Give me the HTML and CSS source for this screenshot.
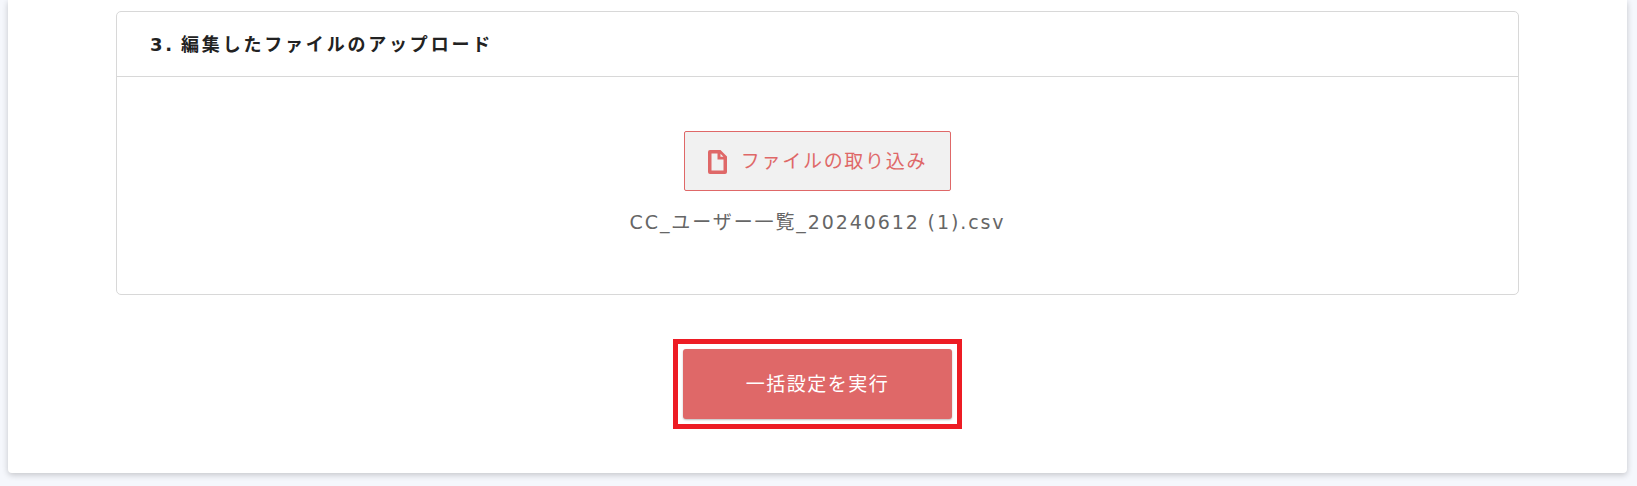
FILE: index.html
```html
<!DOCTYPE html>
<html lang="ja">
<head>
  <meta charset="UTF-8" />
  <title>一括設定</title>
  <link rel="stylesheet" href="styles.css">
</head>
<body>

<div class="panel">
  <div class="card">
    <div class="card-header">
      <h3>3. 編集したファイルのアップロード</h3>
    </div>
    <div class="card-body">
      <button class="file-btn" type="button">
        <svg class="file-icon" viewBox="0 0 19 24" width="19" height="24">
          <path fill-rule="evenodd" d="M2 0h10.500L19 6.500V22a2 2 0 0 1-2 2H2a2 2 0 0 1-2-2V2a2 2 0 0 1 2-2zM3.500 3.500v17h12V9.500h-6v-6zM12.500 3.800v2.900h2.900z"/>
        </svg>
        <span>ファイルの取り込み</span>
      </button>
      <p class="file-name">CC_ユーザー一覧_20240612 (1).csv</p>
    </div>
  </div>

  <div class="actions">
    <div class="highlight">
      <button class="submit-btn" type="button">一括設定を実行</button>
    </div>
  </div>
</div>

</body>
</html>
```

FILE: styles.css
```css
body {
  margin: 0;
  height: 486px;
  overflow: hidden;
  background-color: #f5f7fc;
  font-family: "DejaVu Sans", "Noto Sans CJK JP", sans-serif;
}

.panel {
  box-sizing: border-box;
  width: 1619px;
  height: 473px;
  margin-left: 8px;
  padding: 11px 108px 0 108px;
  background: #fff;
  border-radius: 0 0 4px 4px;
  box-shadow: 0 2px 6px rgba(0,0,0,0.2);
}

.card {
  box-sizing: border-box;
  height: 284px;
  border: 1px solid #d8d8d8;
  border-radius: 5px;
}

.card-header {
  box-sizing: border-box;
  height: 65px;
  padding: 0 33px 3px;
  display: flex;
  align-items: center;
  border-bottom: 1px solid #d8d8d8;
}

.card-header h3 {
  margin: 0;
  font-size: 18px;
  font-weight: 700;
  letter-spacing: 2.8px;
  word-spacing: -3px;
  color: #222;
}

.card-body {
  display: flex;
  flex-direction: column;
  align-items: center;
  padding-top: 54px;
}

.file-btn {
  box-sizing: border-box;
  width: 267px;
  height: 60px;
  padding-bottom: 4px;
  display: flex;
  align-items: center;
  justify-content: center;
  gap: 14px;
  background: #f1f1f1;
  border: 1px solid #df6868;
  border-radius: 2px;
  color: #df6868;
  font-family: inherit;
  font-size: 19px;
  letter-spacing: 1.7px;
}

.file-icon {
  margin-top: 4px;
  fill: #df6868;
}

.file-name {
  margin: 18px 0 0;
  font-size: 19px;
  line-height: 26px;
  letter-spacing: 1.9px;
  color: #666;
}

.actions {
  display: flex;
  justify-content: center;
  margin-top: 44px;
}

.highlight {
  padding: 5px;
  border: 5px solid #ed1c24;
}

.submit-btn {
  display: block;
  width: 269px;
  height: 70px;
  padding-bottom: 4px;
  background: #df6868;
  border: none;
  border-radius: 3px;
  box-shadow: 0 1px 2px rgba(0,0,0,0.25);
  color: #fff;
  font-family: inherit;
  font-size: 19px;
  letter-spacing: 1.5px;
}
```
